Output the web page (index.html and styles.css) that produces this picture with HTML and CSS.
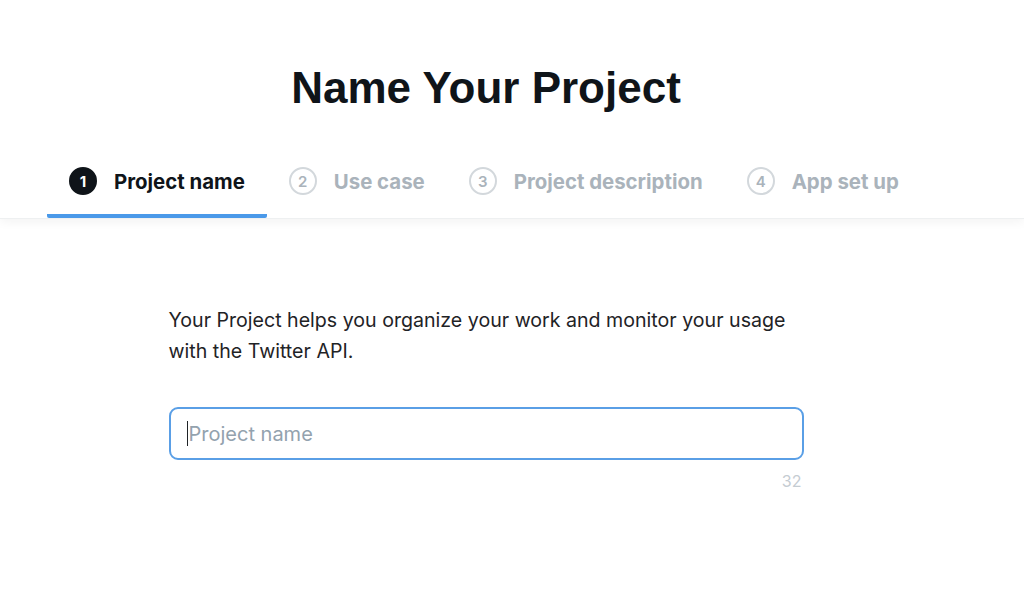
FILE: index.html
```html
<html>
<head>
    <title>Name Your Project</title>
    <link rel="stylesheet" href="styles.css">
</head>
<body>
<div class="header">
    <div class="inner">
        <h1>Name Your Project</h1>
        <div class="steps">
            <div class="step active"><span class="num">1</span>Project name</div>
            <div class="step"><span class="num">2</span>Use case</div>
            <div class="step"><span class="num">3</span>Project description</div>
            <div class="step"><span class="num">4</span>App set up</div>
        </div>
    </div>
</div>
<div class="inner">
    <div class="content">
        <p class="intro">Your Project helps you organize your work and monitor your usage with the Twitter API.</p>
        <div class="field">
            <input type="text" placeholder="Project name">
            <span class="caret"></span>
        </div>
        <div class="counter">32</div>
    </div>
</div>
</body>
</html>
```

FILE: styles.css
```css
body {
    margin: 0;
    font-family: Inter, "Liberation Sans", Arial, sans-serif;
    background-color: white;
    color: #0f1419;
}
.inner {
    width: 972px;
}
.header {
    background-color: white;
    border-bottom: 1px solid #eef0f1;
    box-shadow: 0 3px 10px rgba(0,0,0,0.05);
}
h1 {
    margin: 0;
    padding-top: 62px;
    font-family: "Liberation Sans", Arial, sans-serif;
    font-size: 44px;
    line-height: 52px;
    text-align: center;
}
.steps {
    display: flex;
    padding-left: 47px;
    margin-top: 34px;
}
.step {
    display: flex;
    align-items: center;
    gap: 17px;
    padding: 0 22px;
    height: 66px;
    font-size: 20.4px;
    font-weight: bold;
    color: #aab3bb;
    border-bottom: 4px solid transparent;
    border-radius: 2px;
}
.step.active {
    color: #0f1419;
    border-bottom-color: #4a99e9;
}
.num {
    display: flex;
    align-items: center;
    justify-content: center;
    width: 24px;
    height: 24px;
    border: 2px solid #d3d8dc;
    border-radius: 50%;
    font-size: 15px;
    font-weight: 600;
}
.step.active .num {
    background-color: #0f1419;
    border-color: #0f1419;
    color: white;
    font-weight: bold;
}
.content {
    width: 635px;
    margin: 0 auto;
    padding-top: 86px;
}
.intro {
    margin: 0;
    font-size: 19.6px;
    line-height: 31px;
    color: #1f2326;
}
.field {
    position: relative;
    margin-top: 40px;
}
input {
    width: 100%;
    box-sizing: border-box;
    height: 53px;
    padding: 0 18px;
    border: 2px solid #5a9fe6;
    border-radius: 9px;
    font-family: Inter, "Liberation Sans", Arial, sans-serif;
    font-size: 20px;
    outline: none;
}
input::placeholder {
    color: #93a2ae;
}
.caret {
    position: absolute;
    left: 18px;
    top: 14px;
    width: 1px;
    height: 25px;
    background-color: #1f2326;
}
.counter {
    margin-top: 11px;
    text-align: right;
    padding-right: 2px;
    font-size: 16px;
    color: #c5ccd2;
}
```
